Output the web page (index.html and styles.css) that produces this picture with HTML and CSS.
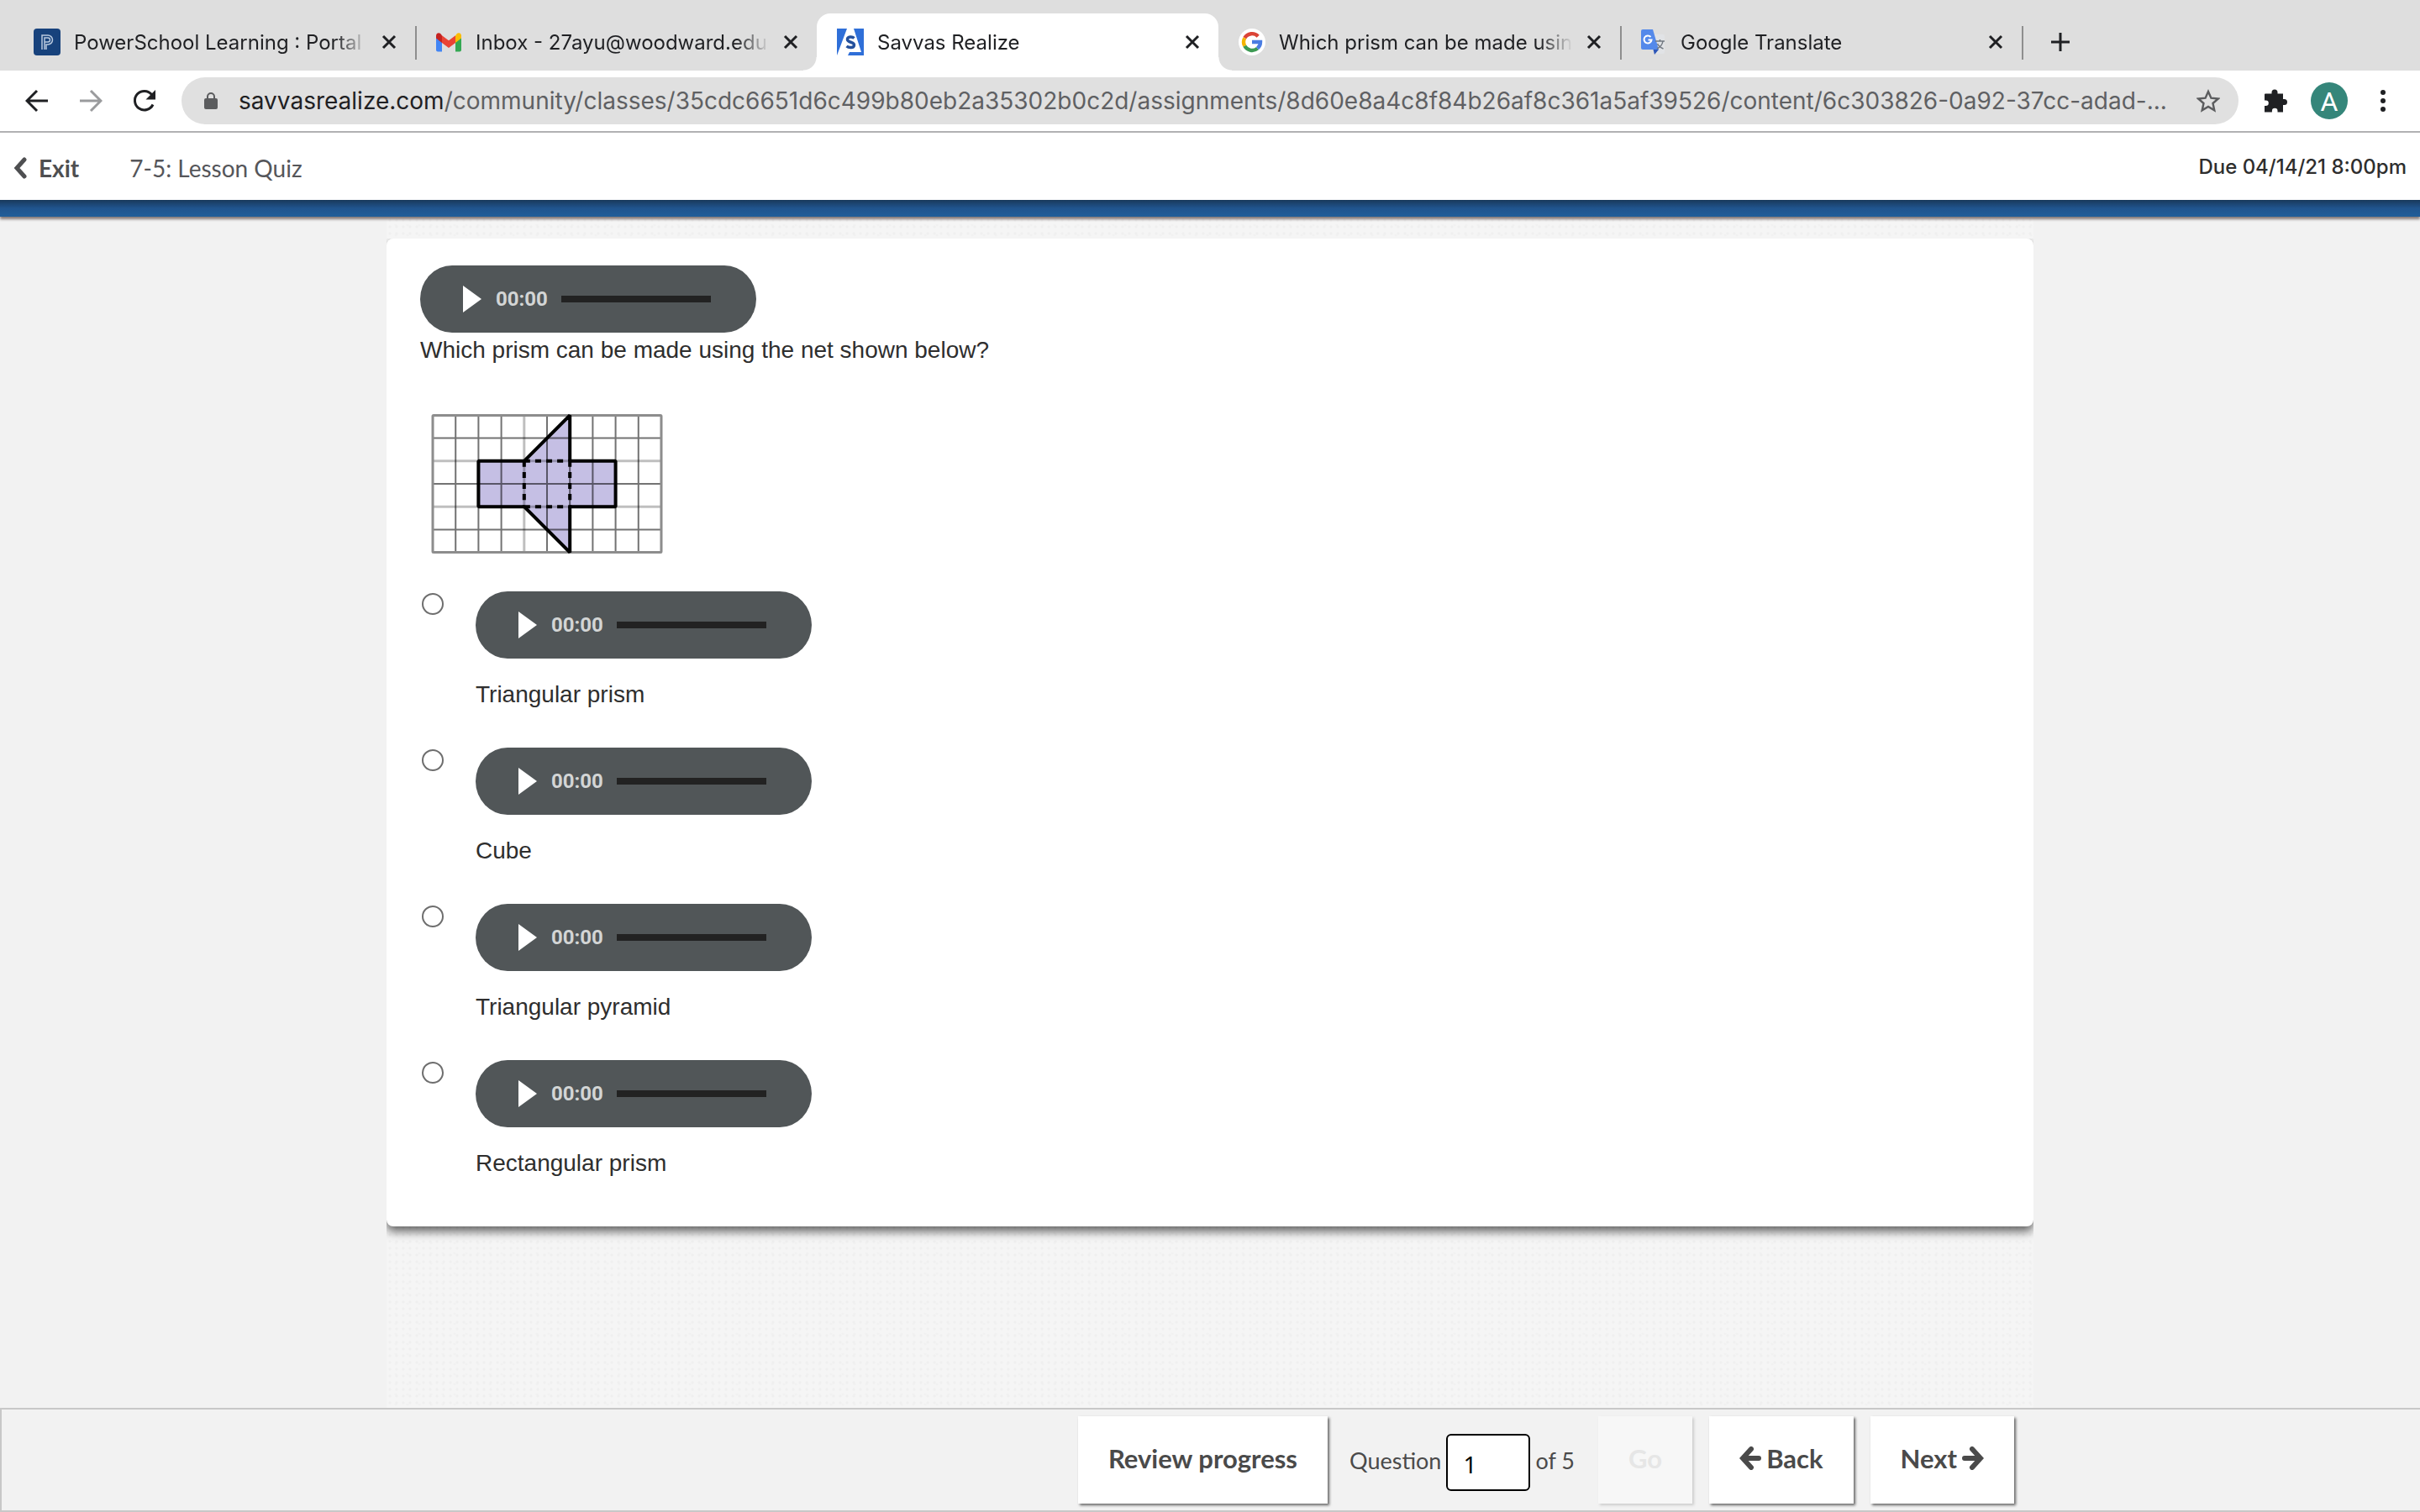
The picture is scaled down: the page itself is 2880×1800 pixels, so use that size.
FILE: index.html
```html
<!DOCTYPE html>
<html lang="en">
<head>
  <meta charset="UTF-8" />
  <title>Savvas Realize</title>
  <link rel="stylesheet" href="styles.css">
</head>
<body>
  <div class="tab-strip">
    <div class="tab">
      <svg class="favicon" viewBox="0 0 32 32"><rect width="32" height="32" rx="4" fill="#17427c"/><path d="M10 25V8h7a5.500 5.500 0 0 1 0 11h-2v6M13 25V11h4a2.500 2.500 0 0 1 0 5h-4" fill="none" stroke="#b9c9de" stroke-width="1.500"/></svg>
      <span class="tab-title">PowerSchool Learning : Portal :</span>
      <button class="tab-close" aria-label="Close tab"><svg viewBox="0 0 18 18"><path d="M2 2l14 14M16 2L2 16"/></svg></button>
    </div>
    <div class="tab">
      <svg class="favicon" viewBox="0 0 32 32"><path d="M1 8v17.500c0 1 1 2 2 2h5V14z" fill="#4285f4"/><path d="M31 8v17.500c0 1-1 2-2 2h-5V14z" fill="#34a853"/><path d="M24 8.500v8.500l7-5.500V8.500c0-3-3-4.200-5.200-2.600z" fill="#fbbc04"/><path d="M8 17V8.300l8 6 8-6V17l-8 6z" fill="#ea4335"/><path d="M1 8.500v3L8 17V8.300L6.200 5.900C4 4.300 1 5.500 1 8.500z" fill="#c5221f"/></svg>
      <span class="tab-title">Inbox - 27ayu@woodward.edu</span>
      <button class="tab-close" aria-label="Close tab"><svg viewBox="0 0 18 18"><path d="M2 2l14 14M16 2L2 16"/></svg></button>
    </div>
    <div class="tab active">
      <svg class="favicon" viewBox="0 0 32 32"><path d="M0 0h12L0 32zM20 0h12v32H13l2-4h14z" fill="#2f6fd8"/><path d="M20.500 11.500c-2-2-8-2.200-8 1.500 0 4 8 2.500 8 6.500 0 4-6.500 3.500-9 1.500" fill="none" stroke="#24509c" stroke-width="3.500"/></svg>
      <span class="tab-title">Savvas Realize</span>
      <button class="tab-close" aria-label="Close tab"><svg viewBox="0 0 18 18"><path d="M2 2l14 14M16 2L2 16"/></svg></button>
    </div>
    <div class="tab">
      <svg class="favicon" viewBox="0 0 32 32"><circle cx="16" cy="16" r="16" fill="#fff"/><g fill="none" stroke-width="4.400"><path d="M23.200 9.200A10 10 0 0 0 7.300 11.200" stroke="#db4437"/><path d="M7.300 11.200a10 10 0 0 0 0 9.600" stroke="#f4b400"/><path d="M7.300 20.800A10 10 0 0 0 22.500 23.600" stroke="#3c9a53"/><path d="M22.500 23.600A10 10 0 0 0 26 16h-10" stroke="#4a7de2"/></g></svg>
      <span class="tab-title">Which prism can be made using</span>
      <button class="tab-close" aria-label="Close tab"><svg viewBox="0 0 18 18"><path d="M2 2l14 14M16 2L2 16"/></svg></button>
    </div>
    <div class="tab">
      <svg class="favicon" viewBox="0 0 32 32"><path d="M12 7h15q2 0 2 2v19q0 2-2 2H17z" fill="#e1e3e6"/><path d="M3 1h12l7 24H3q-2 0-2-2V3q0-2 2-2z" fill="#5489ea"/><path d="M15.500 25H22l-5 6z" fill="#2c56b8"/><path d="M12.500 10a4.500 4.500 0 1 0 1 3.500H9.500" fill="none" stroke="#fff" stroke-width="2"/><path d="M18 15h11M23.500 13v2M27 15q-1 6-7 9M20.500 18q2 4 7 6" fill="none" stroke="#727981" stroke-width="1.500"/></svg>
      <span class="tab-title">Google Translate</span>
      <button class="tab-close" aria-label="Close tab"><svg viewBox="0 0 18 18"><path d="M2 2l14 14M16 2L2 16"/></svg></button>
    </div>
    <button class="new-tab" aria-label="New tab"><svg viewBox="0 0 24 24"><path d="M12 1v22M1 12h22"/></svg></button>
  </div>

  <div class="toolbar">
    <button class="tool" aria-label="Back"><svg viewBox="0 0 28 28"><path d="M27 14H3M14 2L2 14l12 12" fill="none" stroke="#1f2023" stroke-width="3"/></svg></button>
    <button class="tool" aria-label="Forward"><svg viewBox="0 0 28 28"><path d="M1 14h24M14 2l12 12-12 12" fill="none" stroke="#9a9b9d" stroke-width="3"/></svg></button>
    <button class="tool" aria-label="Reload"><svg viewBox="0 0 28 28"><path d="M24 18.500A11.300 11.300 0 1 1 22.500 6.500" fill="none" stroke="#1f2023" stroke-width="3"/><path d="M27 1v11.500H15.500z" fill="#1f2023"/></svg></button>
    <div class="omnibox">
      <svg class="lock" viewBox="0 0 18 22"><path d="M5 9V6a4 4 0 0 1 8 0v3" fill="none" stroke="#5b5c5e" stroke-width="2"/><rect x="1" y="8" width="16" height="13" rx="2" fill="#5b5c5e"/></svg>
      <span class="url"><b>savvasrealize.com</b>/community/classes/35cdc6651d6c499b80eb2a35302b0c2d/assignments/8d60e8a4c8f84b26af8c361a5af39526/content/6c303826-0a92-37cc-adad-...</span>
      <svg class="star" viewBox="0 0 28 28"><path d="M14 3l3.400 7.700 8.400.8-6.300 5.500 1.800 8.200-7.300-4.300-7.300 4.300 1.800-8.200-6.300-5.500 8.400-.8z" fill="none" stroke="#5b5c5e" stroke-width="2.400"/></svg>
    </div>
    <svg class="puzzle" viewBox="0 0 28 28"><path d="M2 5.500h7.500V4a3.500 3.500 0 0 1 7 0v1.500H23V12h1.500a3.500 3.500 0 0 1 0 7H23v8.500h-6.500V26a3.300 3.300 0 0 0-6.600 0v1.500H1V20h1.500a3.300 3.300 0 0 0 0-6.600H1V6.500q0-1 1-1z" fill="#1f2023"/></svg>
    <span class="avatar">A</span>
    <svg class="dots" viewBox="0 0 8 28"><circle cx="4" cy="4" r="3"/><circle cx="4" cy="14" r="3"/><circle cx="4" cy="24" r="3"/></svg>
  </div>

  <header class="quiz-header">
    <a class="exit" href="#"><svg viewBox="0 0 16 26"><path d="M13 3L4 13l9 10" fill="none" stroke="#4e4f51" stroke-width="5" stroke-linecap="round"/></svg>Exit</a>
    <span class="quiz-title">7-5: Lesson Quiz</span>
    <span class="due">Due 04/14/21 8:00pm</span>
  </header>
  <div class="blue-bar"></div>

  <main class="quiz-body">
    <section class="card">
      <div class="player">
        <button class="play" aria-label="Play"></button><span class="time">00:00</span><span class="track"></span>
      </div>
      <p class="question">Which prism can be made using the net shown below?</p>
      <svg class="net" viewBox="0 0 274 166">
        <path d="M56 56h54L164 2v54h54v54h-54v54l-54-54H56z" fill="#c5bfe4"/>
        <path d="M29 2v162M56 2v162M83 2v162M137 2v162M164 2v162M191 2v162M218 2v162M245 2v162M2 29h270M2 83h270M2 137h270" stroke="#000" stroke-opacity=".55" stroke-width="2" fill="none"/>
        <path d="M110 2v162M2 56h270M2 110h270" stroke="#000" stroke-opacity=".25" stroke-width="3" fill="none"/>
        <rect x="2" y="2" width="270" height="162" rx="1" fill="none" stroke="#8d8d8d" stroke-width="3"/>
        <path d="M110 56H56v54h54l54 54v-54h54V56h-54V2z" fill="none" stroke="#000" stroke-width="4" stroke-linejoin="bevel"/>
        <path d="M110 56v54M164 56v54M110 56h54M110 110h54" fill="none" stroke="#000" stroke-width="4" stroke-dasharray="7 6"/>
      </svg>
      <div class="choice">
        <input type="radio" name="answer" id="a1">
        <div>
          <div class="player"><button class="play" aria-label="Play"></button><span class="time">00:00</span><span class="track"></span></div>
          <label for="a1">Triangular prism</label>
        </div>
      </div>
      <div class="choice">
        <input type="radio" name="answer" id="a2">
        <div>
          <div class="player"><button class="play" aria-label="Play"></button><span class="time">00:00</span><span class="track"></span></div>
          <label for="a2">Cube</label>
        </div>
      </div>
      <div class="choice">
        <input type="radio" name="answer" id="a3">
        <div>
          <div class="player"><button class="play" aria-label="Play"></button><span class="time">00:00</span><span class="track"></span></div>
          <label for="a3">Triangular pyramid</label>
        </div>
      </div>
      <div class="choice">
        <input type="radio" name="answer" id="a4">
        <div>
          <div class="player"><button class="play" aria-label="Play"></button><span class="time">00:00</span><span class="track"></span></div>
          <label for="a4">Rectangular prism</label>
        </div>
      </div>
    </section>
  </main>

  <footer class="quiz-footer">
    <div class="footer-inner">
      <button class="btn">Review progress</button>
      <div class="pager">
        <label for="qnum">Question</label>
        <input type="text" id="qnum" value="1">
        <span>of 5</span>
      </div>
      <button class="btn" disabled>Go</button>
      <button class="btn"><svg viewBox="0 0 26 28"><path d="M23 14H5M14 3L4 14l10 11" fill="none" stroke="#4a4a4a" stroke-width="6" stroke-linecap="round"/></svg>Back</button>
      <button class="btn">Next<svg viewBox="0 0 26 28"><path d="M3 14h18M12 3l10 11-10 11" fill="none" stroke="#4a4a4a" stroke-width="6" stroke-linecap="round"/></svg></button>
    </div>
  </footer>
</body>
</html>
```
FILE: styles.css
```css
* {
  box-sizing: border-box;
}
body {
  margin: 0;
  min-height: 100vh;
  display: flex;
  flex-direction: column;
  background: #f2f2f2;
  font-family: "Liberation Sans", Arial, sans-serif;
  font-size: 28px;
  color: #2e2e2e;
}
button {
  border: none;
  background: none;
  padding: 0;
  font: inherit;
  color: inherit;
}
svg {
  display: block;
  flex: none;
}

/* browser tabs */
.tab-strip {
  display: flex;
  height: 84px;
  padding: 16px 0 0 16px;
  background: #dedede;
  font-family: Inter, sans-serif;
  font-size: 24px;
  color: #1f2023;
}
.tab {
  position: relative;
  display: flex;
  align-items: center;
  flex: 0 1 478px;
  min-width: 0;
  padding: 0 22px 0 24px;
}
.tab::after {
  content: "";
  position: absolute;
  right: -2px;
  top: 15px;
  width: 2px;
  height: 40px;
  background: #8e8e8e;
}
.tab:has(+ .active)::after {
  display: none;
}
.favicon {
  width: 32px;
  height: 32px;
}
.tab-title {
  flex: 1;
  margin: 0 16px;
  overflow: hidden;
  white-space: nowrap;
  mask-image: linear-gradient(to right, #000 calc(100% - 40px), transparent);
}
.tab-close svg {
  width: 18px;
  height: 18px;
}
.tab-close path, .new-tab path {
  fill: none;
  stroke: #1f2023;
  stroke-width: 3;
}
.tab.active {
  background: #fff;
  border-radius: 16px 16px 0 0;
}
.tab.active::before, .tab.active::after {
  content: "";
  position: absolute;
  top: auto;
  bottom: 0;
  width: 16px;
  height: 16px;
}
.tab.active::before {
  left: -16px;
  background: radial-gradient(circle at 0 0, transparent 15px, #fff 16px);
}
.tab.active::after {
  right: -16px;
  background: radial-gradient(circle at 100% 0, transparent 15px, #fff 16px);
}
.new-tab {
  margin-left: 34px;
}
.new-tab svg {
  width: 24px;
  height: 24px;
}

/* address bar */
.toolbar {
  display: flex;
  align-items: center;
  height: 74px;
  padding: 0 40px 0 30px;
  background: #fff;
  border-bottom: 2px solid #b1b1b3;
}
.tool {
  margin-right: 36px;
}
.tool svg, .star, .puzzle {
  width: 28px;
  height: 28px;
}
.omnibox {
  display: flex;
  align-items: center;
  flex: 1;
  min-width: 0;
  height: 56px;
  margin-right: 30px;
  margin-left: -6px;
  padding: 0 22px 0 26px;
  border-radius: 28px;
  background: #e0e0e0;
}
.lock {
  width: 18px;
  height: 22px;
}
.url {
  flex: 1;
  margin: 0 14px 0 24px;
  overflow: hidden;
  white-space: nowrap;
  font-family: Inter, sans-serif;
  font-size: 28px;
  color: #5f6063;
}
.url b {
  font-weight: 400;
  color: #1f2023;
}
.avatar {
  width: 44px;
  height: 44px;
  margin: 0 38px 0 28px;
  border-radius: 50%;
  background: #35867a;
  color: #fff;
  font-family: Roboto, sans-serif;
  font-size: 32px;
  line-height: 46px;
  text-align: center;
}
.dots {
  width: 8px;
  height: 28px;
  fill: #1f2023;
}

/* quiz header */
.quiz-header {
  display: flex;
  align-items: center;
  height: 80px;
  padding: 4px 16px 0;
  background: #fff;
  font-family: Lato, sans-serif;
  color: #55565a;
}
.exit {
  display: flex;
  align-items: center;
  gap: 14px;
  margin-right: 60px;
  font-weight: 700;
  color: #4e4f51;
  text-decoration: none;
}
.exit svg {
  width: 16px;
  height: 26px;
}
.due {
  margin-left: auto;
  padding-bottom: 4px;
  font-family: Inter, sans-serif;
  font-size: 24px;
  font-weight: 500;
  color: #2e2e2e;
}
.blue-bar {
  position: relative;
  height: 20px;
  background: linear-gradient(#19395b, #20548e 10px, #215e99);
  box-shadow: 0 3px 3px #857a78;
}

/* question card */
.quiz-body {
  flex: 1;
  width: 1960px;
  max-width: 100%;
  margin: 0 auto;
  padding-top: 26px;
  background-color: #f5f5f5;
  background-image: radial-gradient(#efefef 1px, transparent 2px), radial-gradient(#f1f1f1 1px, transparent 2px);
  background-size: 8px 8px, 14px 12px;
  background-position: 0 0, 4px 4px;
}
.card {
  padding: 32px 40px 54px;
  background: #fff;
  border-radius: 8px;
  box-shadow: 0 6px 12px rgba(0, 0, 0, 0.6);
  clip-path: inset(0 0 -24px);
}
.player {
  display: flex;
  align-items: center;
  width: 400px;
  height: 80px;
  padding-left: 51px;
  border-radius: 38px / 40px;
  background: #515658;
}
.play {
  width: 22px;
  height: 32px;
  background: #fff;
  clip-path: polygon(0 0, 100% 50%, 0 100%);
}
.time {
  width: 78px;
  margin-left: 17px;
  font-family: Roboto, sans-serif;
  font-size: 24px;
  font-weight: 700;
  line-height: 30px;
  color: #d3d5d5;
}
.track {
  width: 178px;
  height: 8px;
  background: #222;
}
.question {
  margin: 0;
  line-height: 42px;
}
.net {
  width: 276px;
  height: 168px;
  margin: 54px 0 0 13px;
}
.choice {
  display: flex;
  gap: 38px;
  height: 186px;
}
.net + .choice {
  margin-top: 44px;
}
.choice:last-child {
  height: auto;
}
.choice input {
  appearance: none;
  width: 26px;
  height: 26px;
  margin: 2px 0 0 2px;
  border: 2px solid #6e6e6e;
  border-radius: 50%;
  background: #fff;
}
.choice label {
  display: block;
  margin-top: 22px;
  line-height: 42px;
}

/* footer */
.quiz-footer {
  height: 124px;
  border: 2px solid #c8c8c8;
  border-right: none;
  font-family: Lato, sans-serif;
  color: #4a4a4a;
}
.footer-inner {
  display: flex;
  justify-content: flex-end;
  width: 1960px;
  max-width: 100%;
  margin: 0 auto;
  padding: 8px 24px 0 0;
}
.btn {
  display: flex;
  align-items: center;
  gap: 6px;
  height: 104px;
  padding: 0 36px 4px;
  background: #fff;
  box-shadow: 2px 2px 3px #666;
  font-size: 31px;
  font-weight: 700;
  margin-left: 20px;
}
.btn:disabled {
  background: #f7f7f7;
  color: #e6e6e6;
  box-shadow: 2px 2px 3px #ccc;
}
.btn svg {
  width: 26px;
  height: 28px;
}
.pager {
  display: flex;
  align-items: center;
  gap: 6px;
  margin: 0 8px 0 26px;
  font-size: 27px;
}
.pager input {
  width: 100px;
  height: 68px;
  margin-top: 6px;
  padding: 4px 18px 0;
  border: 2px solid #000;
  border-radius: 6px;
  font: 28px "Noto Sans", sans-serif;
}
```
